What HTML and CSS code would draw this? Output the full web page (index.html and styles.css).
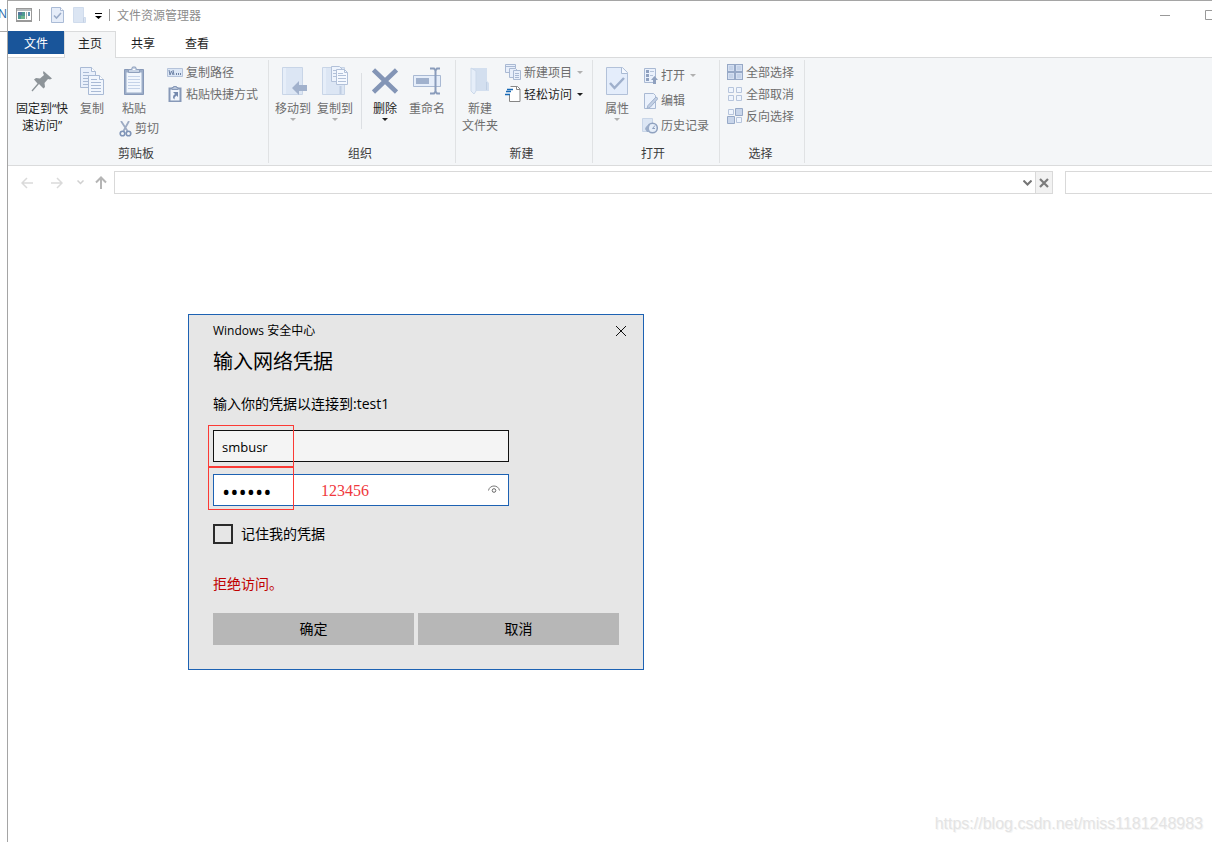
FILE: index.html
```html
<!DOCTYPE html>
<html lang="zh-CN">
<head>
<meta charset="utf-8">
<title>文件资源管理器</title>
<link rel="stylesheet" href="styles.css">
</head>
<body>
<div class="desktop">
  <div class="behind">N</div>
  <main class="window">
    <header class="titlebar">
      <svg class="app-icon" width="16" height="14" viewBox="0 0 16 14" shape-rendering="crispEdges"><rect x=".5" y=".5" width="15" height="12" fill="#fff" stroke="#999"/><path d="M1 1h14v2H1z" fill="#b9bdbf"/><path d="M2 4h7v7H2z" fill="#4f9a92"/><path d="M2 4h4v3H2z" fill="#56789d"/><path d="M5 8h4v3H5z" fill="#6fb58e"/><path d="M10 4h1v7h-1z" fill="#aaa"/><path d="M12 4h2v4h-2z" fill="#5c93b2"/><path d="M0 12h16v2H0z" fill="#999"/></svg>
      <span class="bar"></span>
      <button class="quick" aria-label="属性"><svg width="13" height="16" viewBox="0 0 13 16"><path d="M.5.5h9l3 3v12H.5z" fill="#e6edf9" stroke="#aabbd6"/><path d="M9.5.5v3h3" fill="#fff" stroke="#aabbd6"/><path d="M3 8.500l2.500 2.500L10 6" fill="none" stroke="#9aabc8" stroke-width="1.600"/></svg></button>
      <button class="quick folder" aria-label="新建文件夹"><svg width="13" height="16" viewBox="0 0 13 16"><path d="M.5.5h10v10h2v5H.5z" fill="#dbe5f3" stroke="#d0dced"/><path d="M10.500 10.500v5" stroke="#c4d1e4"/></svg></button>
      <button class="quick menu" aria-label="自定义快速访问工具栏"><svg width="7" height="6" viewBox="0 0 7 6"><path d="M0 0h7v1H0zM0 3h7L3.500 6z" fill="#000"/></svg></button>
      <span class="bar"></span>
      <h1 class="title">文件资源管理器</h1>
      <div class="controls">
        <button aria-label="最小化"><svg width="10" height="10" viewBox="0 0 10 10"><path d="M0 5.500h10" stroke="#999"/></svg></button>
        <button aria-label="最大化"><svg width="10" height="10" viewBox="0 0 10 10"><path d="M.5.5h9v9h-9z" fill="none" stroke="#999"/></svg></button>
      </div>
    </header>

    <nav class="tabs">
      <button class="tab file">文件</button>
      <button class="tab active">主页</button>
      <button class="tab">共享</button>
      <button class="tab">查看</button>
    </nav>

    <div class="ribbon">
      <section class="group clipboard">
        <div class="tools">
          <button class="big wide on"><span class="pic"><svg width="22" height="22" viewBox="0 0 22 22"><path d="M12.500 1L21 8.500l-2 1-2-.5-3.500 4 .5 4-1.500 1.500-4.500-4.500L1.500 21.500.5 20.500l6-7L3 9.500 5 8l4 .5L13 5l-1-2z" fill="#8d9499"/></svg></span>固定到“快<br>速访问”</button>
          <button class="big"><span class="pic"><svg width="26" height="30" viewBox="0 0 26 30"><g stroke="#a9bad5"><path d="M1.500 1.500h11l4 4v16h-15z" fill="#e9f0fb"/><path d="M12.500 1.500v4h4" fill="#fff"/><path d="M4 6.500h6M4 9.500h7M4 12.500h6M4 15.500h6M4 18.500h6"/><path d="M9.500 9.500h11l4 4v15h-15z" fill="#f1f6fd"/><path d="M20.500 9.500v4h4" fill="#fff"/><path d="M12 13.500h6M12 16.500h10M12 19.500h10M12 22.500h10M12 25.500h10"/></g></svg></span>复制</button>
          <div class="paste">
            <button class="big"><span class="pic"><svg width="20" height="30" viewBox="0 0 20 30"><path d="M.5 3.500h19v25H.5z" fill="#9cadc8" stroke="#8799b8"/><path d="M2.500 6.500h15v20h-15z" fill="#f1f6fd"/><path d="M4 10.500h12M4 13.500h12M4 16.500h12M4 19.500h12M4 22.500h12" stroke="#c4d2e8"/><path d="M4.500 6.500v-3h3l1-2.500h3l1 2.500h3v3z" fill="#c7d3e5" stroke="#8fa0bd"/><path d="M9 3h2v1H9z" fill="#fff"/></svg></span>粘贴</button>
            <button class="small"><svg width="13" height="16" viewBox="0 0 13 16"><path d="M2 0l6.500 10M10 0L4.500 10" fill="none" stroke="#9dabc3" stroke-width="1.800"/><circle cx="3.500" cy="12.500" r="2.300" fill="none" stroke="#7f94b7" stroke-width="1.600"/><circle cx="9.500" cy="12.500" r="2.300" fill="none" stroke="#7f94b7" stroke-width="1.600"/></svg>剪切</button>
          </div>
          <div class="list">
            <button class="small"><svg width="16" height="16" viewBox="0 0 16 16"><path d="M.5 4.500h15v8H.5z" fill="#dce7f6" stroke="#b5c3da"/><path d="M2 6l1 5 1.500-4L6 11M6 6l1 5" fill="none" stroke="#6e83a6"/><path d="M9 9h1v2H9zM11 9h1v2h-1zM13 9h1v2h-1z" fill="#6e83a6"/></svg>复制路径</button>
            <button class="small"><svg width="16" height="16" viewBox="0 0 16 16"><path d="M2.500 2.500h11v13h-11z" fill="#f1f6fd" stroke="#8799b8" stroke-width="2"/><path d="M5 3.500V1.500h1.500V.5h3v1H11v2z" fill="#b8c5da" stroke="#8799b8"/><path d="M6 6h5v5L9.500 9.500Q7 11 7.500 13.500L6 12Q5.500 9.500 8 8z" fill="#7389ae"/></svg>粘贴快捷方式</button>
          </div>
        </div>
        <h2>剪贴板</h2>
      </section>

      <section class="group organize">
        <div class="tools">
          <button class="big"><span class="pic"><svg width="28" height="30" viewBox="0 0 28 30"><path d="M3.500 1.500h20v27h-20z" fill="#dce6f4" stroke="#c8d5e7"/><path d="M4 2h3v26H4z" fill="#e6eef9"/><path d="M13 22l7-7v4h8v6h-8v4z" fill="#a1b1cc"/></svg></span>移动到<i class="caret"></i></button>
          <button class="big"><span class="pic"><svg width="28" height="30" viewBox="0 0 28 30"><path d="M1.500 1.500h22v27h-22z" fill="#dce6f4" stroke="#c8d5e7"/><path d="M2 2h3v26H2z" fill="#e6eef9"/><path d="M19.500 20v8" stroke="#bfcde2" stroke-width="2"/><g stroke="#b2c1d9"><path d="M10.500.5h8l3 3v12h-11z" fill="#eef4fd"/><path d="M12 4.500h5M12 7.500h5M12 10.500h5"/><path d="M15.500 3.500h8l3 3v12h-11z" fill="#f5f9ff"/><path d="M23.500 3.500v3h3M17 7.500h5M17 9.500h8M17 12.500h8M17 15.500h8" fill="none"/></g></svg></span>复制到<i class="caret"></i></button>
          <span class="divider"></span>
          <button class="big on"><span class="pic"><svg width="26" height="26" viewBox="0 0 26 26"><path d="M1.500 2l23 22M24.500 2l-23 22" stroke="#8395b6" stroke-width="4.500"/></svg></span>删除<i class="caret"></i></button>
          <button class="big"><span class="pic"><svg width="30" height="28" viewBox="0 0 30 28"><path d="M1.500 8.500h27v11h-27z" fill="#e6eefa" stroke="#a9b9d3"/><path d="M4 11h13v6H4z" fill="#a0b1cd"/><path d="M18 1.500h4l1.500 2 1.500-2h3M23.500 3v22M18 26.500h4l1.500-2 1.500 2h3" fill="none" stroke="#8a9cbb" stroke-width="2"/></svg></span>重命名</button>
        </div>
        <h2>组织</h2>
      </section>

      <section class="group create">
        <div class="tools">
          <button class="big"><span class="pic"><svg width="20" height="28" viewBox="0 0 20 28"><path d="M1 1h16v13l2 2v8H1z" fill="#d3dfef"/><path d="M1 1l5 3v20l-2 3-3-3z" fill="#e6eef9" stroke="#ccd9ea"/><path d="M16.500 15v8" stroke="#c0cfe3"/></svg></span>新建<br>文件夹</button>
          <div class="list">
            <button class="small"><svg width="16" height="16" viewBox="0 0 16 16"><g stroke="#a9b9d3" fill="#e8effb"><path d="M.5.5h10v8H.5z"/><path d="M.5 2.500h10"/><path d="M4.500 4.500h6l2 2v7h-8z"/><path d="M8.500 6.500h7v9h-7z"/><path d="M10 9.500h4M10 11.500h4M10 13.500h4"/></g></svg>新建项目<i class="caret"></i></button>
            <button class="small on"><svg width="16" height="16" viewBox="0 0 16 16"><path d="M5.500.5h7l2.500 2.500v12.500H4.500V9" fill="#fff" stroke="#868686"/><path d="M11.500.5v3H15" fill="none" stroke="#868686"/><path d="M2 3.500h6M1 5.500h5M0 8.500h5" stroke="#1769b5" stroke-width="1.500"/></svg>轻松访问<i class="caret"></i></button>
          </div>
        </div>
        <h2>新建</h2>
      </section>

      <section class="group open">
        <div class="tools">
          <button class="big"><span class="pic"><svg width="22" height="30" viewBox="0 0 22 30"><path d="M.5 1.500h16l5 5v22H.5z" fill="#e4edfb" stroke="#b2c1d9"/><path d="M15.500 1.500v6h6" fill="#f5f9ff" stroke="#a9bad3"/><path d="M4 17l4.500 5L18 12" fill="none" stroke="#9fb0cc" stroke-width="2.500"/></svg></span>属性<i class="caret"></i></button>
          <div class="list tall">
            <button class="small"><svg width="16" height="16" viewBox="0 0 16 16"><path d="M2.500.5h11v14h-11z" fill="#eaf1fc" stroke="#a9b9d3"/><path d="M4 2h3v3H4zM4 6h3v3H4zM4 10h3v3H4z" fill="#8fa1bf"/><path d="M8 3.500h4M8 7.500h3" stroke="#b5c4da"/><path d="M12.500 8l3.500 4h-2v4h-3v-4H9z" fill="#8fa1bf"/></svg>打开<i class="caret"></i></button>
            <button class="small"><svg width="16" height="16" viewBox="0 0 16 16"><path d="M2.500.5h9l2 2v13h-11z" fill="#eaf1fc" stroke="#a9b9d3"/><path d="M14 4l2 1.500-8 9-3 1 1-3z" fill="#c3d0e4" stroke="#9fb0cc"/></svg>编辑</button>
            <button class="small"><svg width="16" height="16" viewBox="0 0 16 16"><path d="M.5.5h10v13H.5z" fill="#dce6f4" stroke="#c8d5e7"/><circle cx="10.500" cy="10" r="4.800" fill="#e6eef9" stroke="#8fa1bf" stroke-width="1.500"/><path d="M10.500 10.500L13 7.500M10.500 10.500H13" fill="none" stroke="#8fa1bf"/><path d="M3 11q1-4 5-4-2 3 0 7H5z" fill="#9badc9"/></svg>历史记录</button>
          </div>
        </div>
        <h2>打开</h2>
      </section>

      <section class="group select">
        <div class="tools">
          <div class="list">
            <button class="small"><svg width="16" height="16" viewBox="0 0 16 16"><path d="M0 0h16v16H0z" fill="#97a9c7"/><path d="M1 1h6v6H1zM9 1h6v6H9zM1 9h6v6H1zM9 9h6v6H9z" fill="#d4dff1"/><path d="M2 2h4v4H2zM10 2h4v4h-4zM2 10h4v4H2zM10 10h4v4h-4z" fill="#c5d3e9"/></svg>全部选择</button>
            <button class="small"><svg width="16" height="16" viewBox="0 0 16 16"><path d="M1.500 1.500h5v5h-5zM9.500 1.500h5v5h-5zM1.500 9.500h5v5h-5zM9.500 9.500h5v5h-5z" fill="#eff5fe" stroke="#b7c5dc"/></svg>全部取消</button>
            <button class="small"><svg width="16" height="16" viewBox="0 0 16 16"><path d="M1.500 1.500h5v5h-5zM9.500 9.500h5v5h-5z" fill="#eff5fe" stroke="#b7c5dc"/><path d="M8.500.5h7v7h-7zM.5 8.500h7v7h-7z" fill="#c8d5ea" stroke="#97a9c7"/></svg>反向选择</button>
          </div>
        </div>
        <h2>选择</h2>
      </section>
    </div>

    <div class="navbar">
      <button class="arrow" aria-label="后退"><svg width="12" height="12" viewBox="0 0 12 12"><path d="M12 6H1M6 1L1 6l5 5" fill="none" stroke="#dadada" stroke-width="1.500"/></svg></button>
      <button class="arrow" aria-label="前进"><svg width="12" height="12" viewBox="0 0 12 12"><path d="M0 6h11M6 1l5 5-5 5" fill="none" stroke="#dadada" stroke-width="1.500"/></svg></button>
      <button class="recent" aria-label="最近位置"><svg width="7" height="5" viewBox="0 0 7 5"><path d="M.5.5l3 3 3-3" fill="none" stroke="#d0d0d0" stroke-width="1.500"/></svg></button>
      <button class="up" aria-label="向上"><svg width="12" height="13" viewBox="0 0 12 13"><path d="M6 13V2M1 6.500l5-5 5 5" fill="none" stroke="#b5b5b5" stroke-width="2"/></svg></button>
      <div class="address">
        <input type="text" aria-label="地址">
        <button class="drop" aria-label="展开"><svg width="9" height="6" viewBox="0 0 9 6"><path d="M.5.5l4 4 4-4" fill="none" stroke="#757575" stroke-width="2"/></svg></button>
        <button class="stop" aria-label="停止"><svg width="10" height="10" viewBox="0 0 10 10"><path d="M1 1l8 8M9 1L1 9" stroke="#7b7b7b" stroke-width="2.200"/></svg></button>
      </div>
      <input class="search" type="search" aria-label="搜索">
    </div>
  </main>

  <form class="dialog" role="dialog" aria-labelledby="prompt">
    <header class="dialog-bar">
      <span>Windows 安全中心</span>
      <button type="button" class="close" aria-label="关闭"><svg width="10" height="10" viewBox="0 0 10 10"><path d="M0 0l10 10M10 0L0 10" stroke="#111"/></svg></button>
    </header>
    <h2 class="prompt" id="prompt">输入网络凭据</h2>
    <p class="message">输入你的凭据以连接到:test1</p>
    <div class="fields">
      <input class="field" type="text" value="smbusr" aria-label="用户名">
      <div class="secret">
        <input class="field" type="password" value="123456" aria-label="密码">
        <button type="button" class="reveal" aria-label="显示密码"><svg width="12" height="9" viewBox="0 0 12 9"><path d="M.5 5.500C1.500-.5 10.500-.5 11.500 5.500" fill="none" stroke="#777"/><circle cx="6" cy="5.500" r="1.800" fill="none" stroke="#666"/></svg></button>
      </div>
      <span class="mark mark-user"></span>
      <span class="mark mark-pass"></span>
      <span class="note">123456</span>
    </div>
    <label class="remember"><input type="checkbox">记住我的凭据</label>
    <p class="error">拒绝访问。</p>
    <div class="actions">
      <button type="button">确定</button>
      <button type="button">取消</button>
    </div>
  </form>
  <div class="watermark">https://blog.csdn.net/miss1181248983</div>
</div>
</body>
</html>
```

FILE: styles.css
```css
* { box-sizing: border-box; }
body {
  margin: 0;
  background: #fff;
  color: #1e1e1e;
  font: 12px/17px "Open Sans", "Noto Sans CJK SC", sans-serif;
}
button, input { font: inherit; color: inherit; margin: 0; }
button { padding: 0; border: 0; background: none; }
h1, h2, p { margin: 0; font-weight: 400; }
svg { display: block; flex: none; }

.desktop {
  position: relative;
  display: flex;
  min-height: 100vh;
  overflow: hidden;
}
.behind {
  flex: none;
  width: 7px;
  height: 32px;
  padding-top: 5px;
  border-bottom: 1px solid #aaa;
  overflow: hidden;
  color: #2468a8;
  text-indent: -2px;
}
.window {
  flex: 1;
  min-width: 0;
  border: solid #a5a5a5;
  border-width: 1px 0 0 1px;
}

.titlebar { display: flex; align-items: center; height: 30px; padding: 0 0 2px 8px; }
.bar { width: 1px; height: 12px; margin: 0 7px; background: #999; }
.quick { margin-left: 4px; }
.quick.folder { margin-left: 9px; }
.quick.menu { margin-left: 9px; margin-top: 2px; }
.title { color: #8c8c8c; font-size: 12px; }
.controls { display: flex; margin: 0 -20px 0 auto; }
.controls button { display: grid; place-items: center; width: 45px; height: 28px; }

.tabs { position: relative; z-index: 1; display: flex; height: 27px; }
.tab { padding: 0 15px 2px; height: 26px; }
.tab.file { height: 23px; padding: 1px 16px 0; background: #19559a; color: #fff; }
.tab.active {
  height: 27px;
  padding: 0 13px 4px;
  border: 1px solid #dadbdc;
  border-bottom: 0;
  background: #f5f6f7;
}

.ribbon {
  display: flex;
  height: 109px;
  margin-top: -1px;
  border: solid #dadbdc;
  border-width: 1px 0;
  background: #f4f6f8;
}
.group {
  display: flex;
  flex-direction: column;
  margin: 2px 0;
  padding-bottom: 1px;
  border-right: 1px solid #e0e2e4;
}
.clipboard { padding-left: 6px; padding-right: 10px; }
.organize { padding-left: 4px; padding-right: 8px; }
.create { padding-left: 4px; padding-right: 9px; }
.open { padding-left: 4px; padding-right: 10px; }
.select { padding-left: 7px; padding-right: 10px; }
.group h2 { font-size: 12px; color: #3c3c3c; text-align: center; }
.tools { display: flex; flex: 1; gap: 2px; color: #6d6d6d; }
.on { color: #1e1e1e; }
.big {
  display: block;
  align-self: flex-start;
  flex: none;
  width: 40px;
  margin-top: 5px;
  line-height: 17px;
  white-space: nowrap;
}
.big.wide { width: 56px; }
.pic { display: grid; place-items: center; height: 32px; margin-bottom: 3px; }
.caret {
  display: block;
  width: 0;
  border: 3px solid transparent;
  border-top-color: #b0b0b0;
  border-bottom: 0;
}
.on .caret { border-top-color: #1e1e1e; }
.big .caret { margin: 1px auto 0; }
.small .caret { margin-left: 2px; }
.paste { width: 48px; }
.paste .big { margin-bottom: 3px; }
.paste .small { margin-left: 5px; height: 17px; }
.list { margin: 1px 0 0 3px; }
.select .list { margin-left: 0; }
.list.tall { margin-top: 3px; }
.small { display: flex; align-items: center; gap: 3px; height: 22px; white-space: nowrap; }
.tall .small { height: 25px; }
.divider { width: 1px; height: 56px; margin: 13px 1px 0 4px; background: #dcdfe3; }

.navbar { display: flex; align-items: center; padding: 5px 0 0 13px; }
.arrow { margin-right: 18px; }
.recent { margin: 0 11px 0 -4px; }
.up { margin-right: 7px; }
.address { display: flex; flex: 1; height: 23px; border: 1px solid #d9d9d9; }
.address input { flex: 1; min-width: 0; border: 0; padding: 0 6px; outline: 0; }
.drop { display: grid; place-items: center; width: 15px; }
.stop {
  display: grid;
  place-items: center;
  width: 17px;
  border-left: 1px solid #d9d9d9;
  background: #f2f2f2;
}
.search {
  flex: none;
  width: 147px;
  height: 23px;
  margin-left: 12px;
  border: 1px solid #d9d9d9;
  border-right: 0;
}

.dialog {
  position: absolute;
  left: 188px;
  top: 314px;
  width: 456px;
  padding: 0 24px 24px;
  border: 1px solid #1d62b3;
  background: #e6e6e6;
  color: #000;
  font-size: 14px;
  line-height: 20px;
}
.dialog-bar {
  display: flex;
  align-items: center;
  justify-content: space-between;
  height: 32px;
  font-size: 12px;
}
.close { display: grid; place-items: center; width: 24px; height: 24px; margin-right: -14px; }
.prompt { font-size: 20px; line-height: 30px; }
.message { margin-top: 17px; }
.fields { position: relative; display: grid; gap: 12px; width: 296px; margin-top: 16px; }
.field {
  display: block;
  width: 100%;
  height: 32px;
  padding: 1px 8px 0;
  border: 1px solid #111;
  border-radius: 0;
  outline: 0;
  background: #f4f4f4;
  font-size: 13px;
}
.secret { position: relative; }
.secret .field { border-color: #1d62b3; background: #fff; font-size: 22px; }
.reveal { position: absolute; right: 9px; top: 11px; }
.mark { position: absolute; left: -5px; width: 86px; border: 1px solid #fb3a35; }
.mark-user { top: -5px; height: 42px; }
.mark-pass { top: 37px; height: 43px; }
.note {
  position: absolute;
  left: 108px;
  top: 51px;
  color: #f0383c;
  font: 16px/20px "Liberation Serif", serif;
}
.remember { display: flex; align-items: center; gap: 8px; width: 130px; margin-top: 18px; }
.remember input {
  appearance: none;
  width: 20px;
  height: 20px;
  border: 2px solid #2b2b2b;
}
.error { margin-top: 30px; color: #c00000; }
.actions { display: grid; grid-template-columns: 1fr 1fr; gap: 4px; margin-top: 19px; }
.actions button { height: 32px; background: #b7b7b7; }

.watermark {
  position: absolute;
  right: 9px;
  bottom: 8px;
  color: #e4e4e4;
  font: 16px/20px "Liberation Sans", sans-serif;
  text-shadow: 1px 1px 0 #f4f4f4;
}
```
